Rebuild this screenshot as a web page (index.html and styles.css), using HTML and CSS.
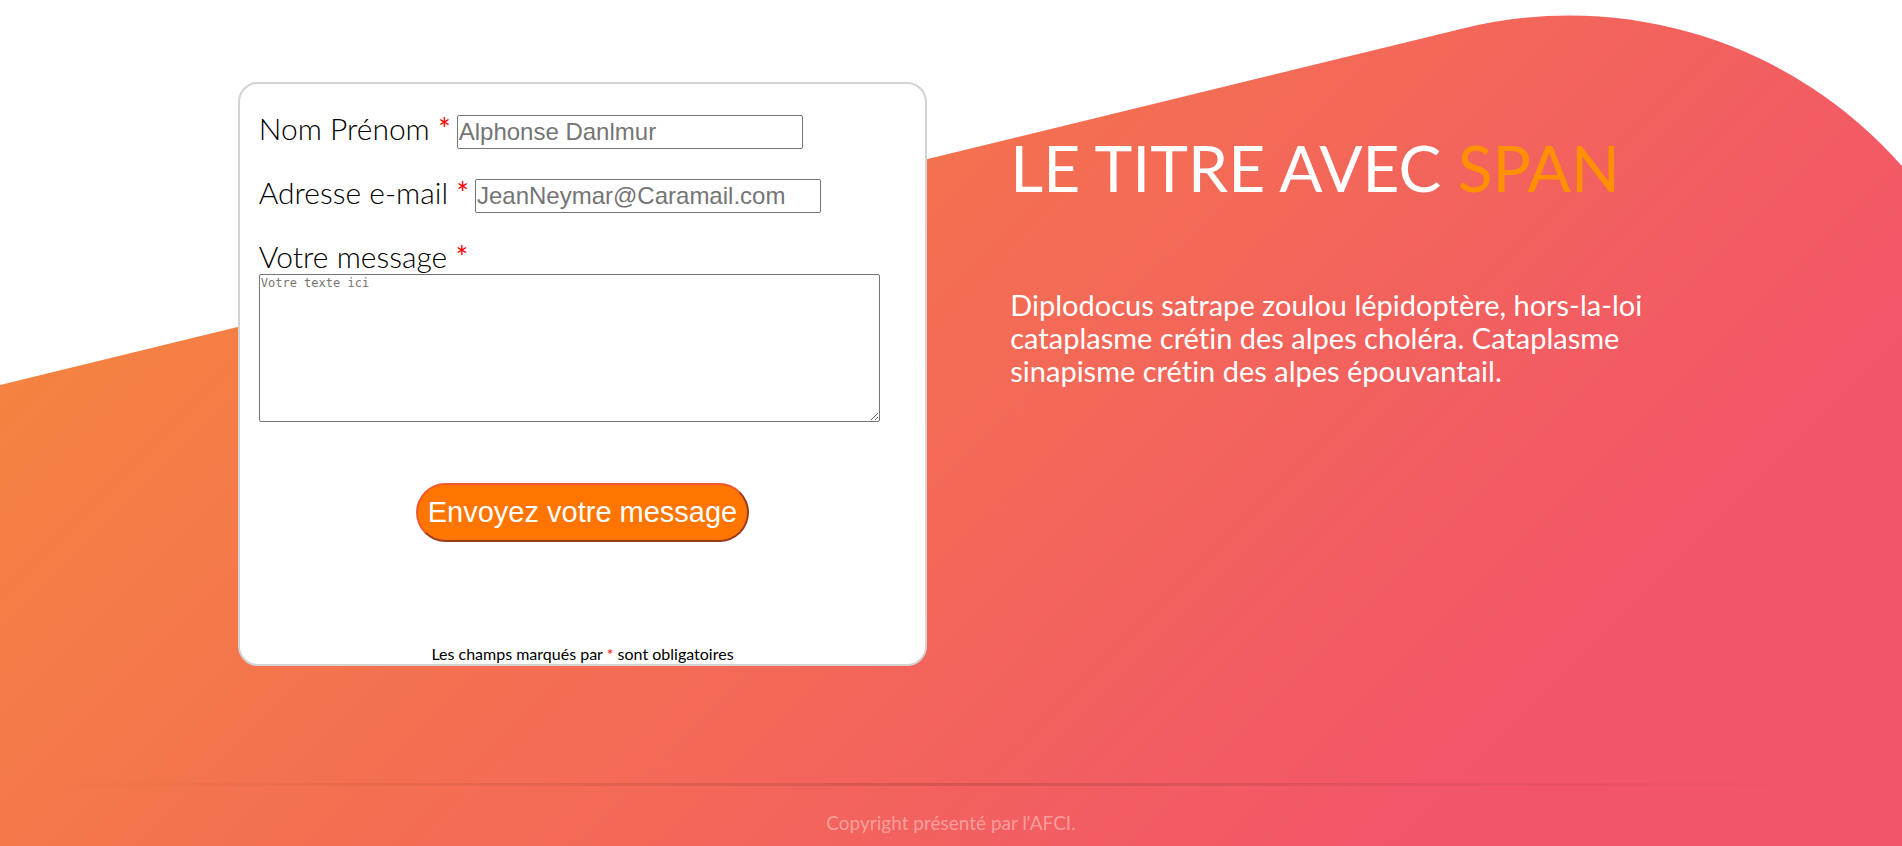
FILE: index.html
```html
<!DOCTYPE html>
<html lang="fr">
<head>
<meta charset="utf-8">
<title>Contact</title>
<link rel="stylesheet" href="styles.css">
</head>
<body>
<svg class="backdrop" viewBox="0 0 1902 846" preserveAspectRatio="none" aria-hidden="true">
  <defs>
    <linearGradient id="sunset" gradientUnits="userSpaceOnUse" x1="180" y1="180" x2="1120" y2="1120">
      <stop offset="0" stop-color="#f58340"/>
      <stop offset="1" stop-color="#f25569"/>
    </linearGradient>
  </defs>
  <path fill="url(#sunset)" d="M0 385 L1465 28 A443 443 0 0 1 1902 166 V846 H0 Z"/>
</svg>
<main class="contact">
  <form class="card">
    <div class="field">
      <label for="name">Nom Prénom <span class="required">*</span></label>
      <input class="text-input" id="name" type="text" placeholder="Alphonse Danlmur">
    </div>
    <div class="field">
      <label for="email">Adresse e-mail <span class="required">*</span></label>
      <input class="text-input" id="email" type="email" placeholder="JeanNeymar@Caramail.com">
    </div>
    <div class="field field-message">
      <label for="message">Votre message <span class="required">*</span></label>
      <textarea class="message" id="message" placeholder="Votre texte ici"></textarea>
    </div>
    <button class="send" type="submit">Envoyez votre message</button>
    <p class="note">Les champs marqués par <span class="required">*</span> sont obligatoires</p>
  </form>
  <section class="intro">
    <h1 class="title">LE TITRE AVEC <span class="accent">SPAN</span></h1>
    <p class="lead">Diplodocus satrape zoulou lépidoptère, hors-la-loi cataplasme crétin des alpes choléra. Cataplasme sinapisme crétin des alpes épouvantail.</p>
  </section>
</main>
<footer class="footer">
  <hr class="rule">
  <p class="copyright">Copyright présenté par l'AFCI.</p>
</footer>
</body>
</html>
```
FILE: styles.css
```css
* { box-sizing: border-box; }

body {
  margin: 0;
  min-height: 100vh;
  display: flex;
  flex-direction: column;
  background: #fff;
  font-family: Lato, "Open Sans", sans-serif;
  font-variant-ligatures: none;
}

.backdrop {
  position: absolute;
  z-index: -1;
  inset: 0;
  width: 100%;
  height: 100%;
}

.contact {
  flex: 1;
  display: grid;
  grid-template-columns: 689fr 663fr;
  align-items: start;
  column-gap: 83px;
  padding: 82px 12% 0 12.5%;
}

.card {
  display: flex;
  flex-direction: column;
  min-height: 584px;
  padding: 31px 19px 0;
  border: 2px solid #d3d3d3;
  border-radius: 20px;
  background: #fff;
}

.field {
  display: flex;
  align-items: baseline;
  gap: 6px;
  margin-bottom: 30px;
  font-size: 30px;
  font-weight: 300;
  line-height: 26px;
  white-space: nowrap;
}

.required {
  color: #f00;
  font-weight: 400;
}

.text-input {
  width: 346px;
  height: 34px;
  padding: 1px;
  border: 1px solid #767676;
  border-radius: 2px;
  font-family: "Liberation Sans", Arial, sans-serif;
  font-size: 24px;
}

.field-message {
  flex-direction: column;
  align-items: stretch;
  gap: 5px;
  margin: 0;
}

.message {
  width: 96%;
  height: 148px;
  padding: 1px;
  border: 1px solid #767676;
  border-radius: 2px;
  font-family: "DejaVu Sans Mono", monospace;
  font-size: 12px;
}

.text-input::placeholder,
.message::placeholder { color: #757575; }

.send {
  align-self: center;
  height: 59px;
  margin-top: 61px;
  padding: 0 10px;
  border: 2px outset #f0592b;
  border-radius: 30px;
  background: #ff7500;
  color: #fff;
  font-family: "Liberation Sans", Arial, sans-serif;
  font-size: 29px;
}

.note {
  margin: auto 0 0;
  font-size: 16px;
  line-height: 20px;
  text-align: center;
}

.intro { color: #fff; }

.title {
  margin: 46px 0 0;
  font-size: 64px;
  font-weight: 400;
  line-height: 80px;
  white-space: nowrap;
}

.accent { color: #ff9100; }

.lead {
  margin: 80px 0 0;
  font-size: 29px;
  line-height: 33px;
}

.footer { padding-bottom: 12px; }

.rule {
  width: 97%;
  height: 3px;
  margin: 0 auto;
  border: 0;
  background: linear-gradient(to right, transparent, rgba(0, 0, 0, 0.12), transparent);
}

.copyright {
  margin: 26px 0 0;
  color: rgba(255, 255, 255, 0.4);
  font-size: 19px;
  line-height: 22px;
  text-align: center;
}
```
